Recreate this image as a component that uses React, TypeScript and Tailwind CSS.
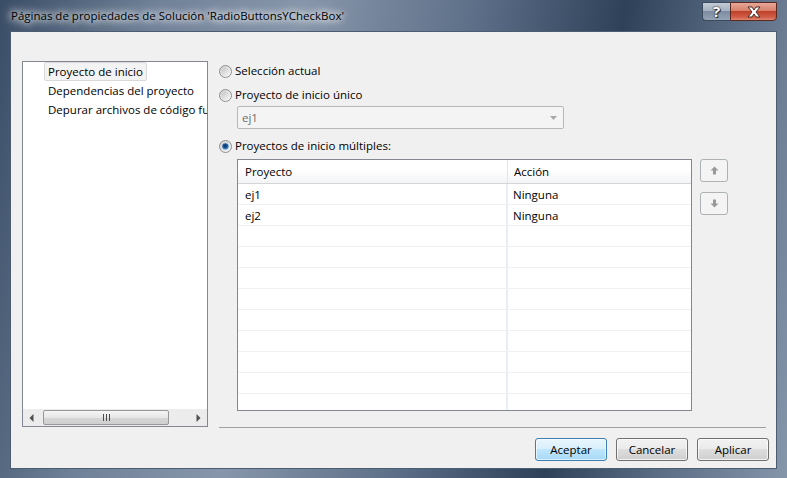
import React from "react";

const Radio = ({ checked }: { checked?: boolean }) => (
  <svg width="13" height="13" viewBox="0 0 13 13" className="shrink-0">
    <defs>
      <linearGradient id="rg1" x1="0" y1="0" x2="1" y2="1">
        <stop offset="0" stopColor="#d0d0d0" />
        <stop offset="1" stopColor="#fbfbfb" />
      </linearGradient>
      <linearGradient id="rg2" x1="0" y1="0" x2="1" y2="1">
        <stop offset="0" stopColor="#c6c6c6" />
        <stop offset="1" stopColor="#f4f4f4" />
      </linearGradient>
      <radialGradient id="rg3" cx="0.45" cy="0.4" r="0.6">
        <stop offset="0" stopColor="#0a2e5c" />
        <stop offset="0.55" stopColor="#1b5a9a" />
        <stop offset="1" stopColor="#79b3e3" />
      </radialGradient>
    </defs>
    <circle cx="6.5" cy="6.5" r="6" fill="url(#rg1)" stroke="#8f8f8f" strokeWidth="1" />
    <circle cx="6.5" cy="6.5" r="4" fill="url(#rg2)" />
    {checked && <circle cx="6.5" cy="6.5" r="3.3" fill="url(#rg3)" />}
  </svg>
);

const Btn = ({ label, def }: { label: string; def?: boolean }) => (
  <div
    className={
      "w-[72px] h-[23px] rounded-[3px] border flex items-center justify-center text-[11.5px] text-black " +
      (def
        ? "border-[#3c7fb1] bg-[linear-gradient(#eaf6fd_0%,#d9f0fc_45%,#bee6fd_50%,#a7d9f5_100%)] shadow-[inset_0_0_0_1px_rgba(255,255,255,0.6)]"
        : "border-[#707070] bg-[linear-gradient(#f2f2f2_0%,#ebebeb_45%,#dddddd_50%,#cfcfcf_100%)] shadow-[inset_0_0_0_1px_rgba(255,255,255,0.7)]")
    }
  >
    {label}
  </div>
);

const ArrowBtn = ({ up }: { up?: boolean }) => (
  <div className="w-[28px] h-[23px] rounded-[3px] border border-[#adb2b5] bg-[#f4f4f4] flex items-center justify-center">
    <svg width="9" height="9" viewBox="0 0 9 9">
      {up ? (
        <path d="M4.5 0.5 L8.5 4.5 H6 V8.5 H3 V4.5 H0.5 Z" fill="#9a9a9a" />
      ) : (
        <path d="M4.5 8.5 L8.5 4.5 H6 V0.5 H3 V4.5 H0.5 Z" fill="#9a9a9a" />
      )}
    </svg>
  </div>
);

export default function App() {
  const rows = ["ej1", "ej2", "", "", "", "", "", "", "", "", "", ""];
  const acc = ["Ninguna", "Ninguna"];
  return (
    <div className="w-[787px] h-[478px] overflow-hidden flex flex-col [font-family:'Open_Sans',sans-serif] bg-[linear-gradient(100deg,#3a4d66_0%,#6f8198_18%,#8796aa_35%,#5d6f88_55%,#2e4159_72%,#5a6c84_85%,#8595aa_100%)]">
      {/* title bar */}
      <div className="h-[31px] flex items-start shrink-0">
        <div className="pl-[11px] pt-[8px] text-[11.5px] leading-[16px] text-black [text-shadow:0_0_6px_#fff,0_0_10px_#fff,0_0_14px_rgba(255,255,255,0.9)]">
          Páginas de propiedades de Solución 'RadioButtonsYCheckBox'
        </div>
        <div className="ml-auto mr-[10px] mt-[2px] flex">
          <div className="w-[28px] h-[19px] rounded-bl-[4px] border border-[#3b4a5c] border-r-0 bg-[linear-gradient(#c3ccd7_0%,#a6b2c1_45%,#7d8ca0_50%,#95a3b5_100%)] flex items-center justify-center">
            <span className="text-[15px] font-bold leading-none text-white [text-shadow:0_0_1px_#222,0_0_2px_#222,1px_1px_0_#333]">?</span>
          </div>
          <div className="w-[47px] h-[19px] rounded-br-[4px] border border-[#5a2a22] bg-[linear-gradient(#e8a898_0%,#d7806c_45%,#c0412a_50%,#d2604a_85%,#e08a70_100%)] flex items-center justify-center">
            <svg width="16" height="12" viewBox="0 0 16 12">
              <path d="M2 1 H6 L8 4 L10 1 H14 L10 6 L14 11 H10 L8 8 L6 11 H2 L6 6 Z" fill="#fff" stroke="#4a2a24" strokeWidth="1" strokeLinejoin="round" />
            </svg>
          </div>
        </div>
      </div>
      {/* client area */}
      <div className="flex-1 px-[10px] pb-[9px] flex">
        <div className="flex-1 border border-[#4c5d72] bg-[#f0f0f0] flex flex-col pl-[11px] pt-[29px] pr-[7px]">
          <div className="flex items-start">
            {/* tree */}
            <div className="w-[186px] h-[366px] border border-[#828790] bg-white flex flex-col overflow-hidden">
              <div className="flex flex-col text-[11.5px] text-black whitespace-nowrap">
                <div className="h-[19px] flex items-center pl-[21px]">
                  <span className="h-[19px] flex items-center px-[3px] border border-[#d9d9d9] rounded-[2px] bg-[#f3f3f3]">Proyecto de inicio</span>
                </div>
                <div className="h-[19px] flex items-center pl-[25px]">Dependencias del proyecto</div>
                <div className="h-[19px] flex items-center pl-[25px]">Depurar archivos de código fuente</div>
              </div>
              <div className="mt-auto h-[17px] bg-[#ececec] flex items-center shrink-0">
                <div className="w-[17px] h-[17px] flex items-center justify-center">
                  <svg width="5" height="8" viewBox="0 0 5 8"><path d="M4.5 0 V8 L0.5 4 Z" fill="#505050" /></svg>
                </div>
                <div className="ml-[3px] w-[126px] h-[15px] rounded-[2px] border border-[#979797] bg-[linear-gradient(#f5f5f5_0%,#e6e6e6_50%,#d6d6d6_51%,#cfcfcf_100%)] flex items-center justify-center gap-[2px]">
                  <div className="w-px h-[7px] bg-[#4a4a4a]" />
                  <div className="w-px h-[7px] bg-[#4a4a4a]" />
                  <div className="w-px h-[7px] bg-[#4a4a4a]" />
                </div>
                <div className="ml-auto w-[17px] h-[17px] flex items-center justify-center">
                  <svg width="5" height="8" viewBox="0 0 5 8"><path d="M0.5 0 V8 L4.5 4 Z" fill="#505050" /></svg>
                </div>
              </div>
            </div>
            {/* right column */}
            <div className="ml-[11px] w-[547px] h-[367px] flex flex-col text-[11.5px] text-black">
              <div className="h-[20px] flex items-center">
                <Radio />
                <span className="ml-[3px]">Selección actual</span>
              </div>
              <div className="mt-[4px] h-[20px] flex items-center">
                <Radio />
                <span className="ml-[3px]">Proyecto de inicio único</span>
              </div>
              <div className="mt-[1px] ml-[18px] w-[327px] h-[23px] border border-[#b8b8b8] rounded-[2px] bg-[#f4f4f4] flex items-center pl-[4px] pr-[6px]">
                <span className="text-[#6d6d6d]">ej1</span>
                <svg className="ml-auto" width="7" height="4" viewBox="0 0 7 4"><path d="M0 0 H7 L3.5 4 Z" fill="#a8a8a8" /></svg>
              </div>
              <div className="mt-[7px] h-[20px] flex items-center">
                <Radio checked />
                <span className="ml-[3px]">Proyectos de inicio múltiples:</span>
              </div>
              <div className="mt-[3px] ml-[18px] flex items-start">
                <div className="w-[455px] h-[252px] border border-[#828790] bg-white overflow-hidden flex flex-col">
                  <div className="h-[24px] shrink-0 flex border-b border-[#d5d5d5] bg-[linear-gradient(#ffffff_0%,#ffffff_40%,#f3f4f6_100%)]">
                    <div className="w-[270px] border-r border-[#e3e5e8] flex items-center pl-[7px] pt-[1px]">Proyecto</div>
                    <div className="flex-1 flex items-center pl-[6px] pt-[1px]">Acción</div>
                  </div>
                  {rows.map((r, i) => (
                    <div key={i} className="h-[21px] shrink-0 flex border-b border-[#f0f0f0]">
                      <div className="w-[270px] border-r-2 border-[#e9eef5] flex items-center pl-[7px] pt-[2px]">{r}</div>
                      <div className="flex-1 flex items-center pl-[5px] pt-[2px]">{acc[i] ?? ""}</div>
                    </div>
                  ))}
                </div>
                <div className="ml-[8px] flex flex-col gap-[10px]">
                  <ArrowBtn up />
                  <ArrowBtn />
                </div>
              </div>
              <div className="mt-auto h-px bg-[#a0a0a0]" />
            </div>
          </div>
          {/* buttons */}
          <div className="mt-[10px] flex justify-end gap-[9px]">
            <Btn label="Aceptar" def />
            <Btn label="Cancelar" />
            <Btn label="Aplicar" />
          </div>
        </div>
      </div>
    </div>
  );
}
